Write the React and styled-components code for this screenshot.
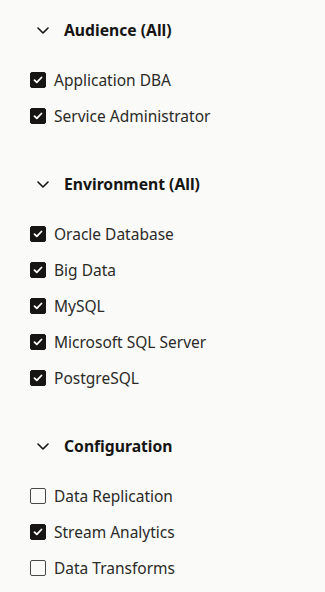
import React from 'react';
import styled, { createGlobalStyle } from 'styled-components';

const Global = createGlobalStyle`
  html, body {
    margin: 0;
    padding: 0;
    background: #fafaf9;
  }
  body {
    font-family: "Noto Sans", "Open Sans", sans-serif;
    color: #161513;
  }
`;

const Panel = styled.div`
  display: flex;
  flex-direction: column;
  padding: 18px 0 0 30px;
`;

const Section = styled.section`
  display: flex;
  flex-direction: column;
  margin-bottom: 38px;

  &:last-child {
    margin-bottom: 0;
  }
`;

const Header = styled.div`
  display: flex;
  align-items: center;
  height: 24px;
  padding-left: 7px;
  gap: 15px;
  margin-bottom: 20px;
  font-size: 15.7px;
  font-weight: 700;
`;

const List = styled.div`
  display: flex;
  flex-direction: column;
`;

const Row = styled.label`
  display: flex;
  align-items: center;
  height: 36px;
  gap: 8px;
  font-size: 15.5px;
  color: #2b2a27;
`;

const Box = styled.span`
  width: 16px;
  height: 16px;
  flex: none;
  box-sizing: border-box;
  border-radius: 2px;
  display: flex;
  align-items: center;
  justify-content: center;
  background: ${p => (p.$checked ? '#161513' : 'transparent')};
  border: 1px solid ${p => (p.$checked ? '#161513' : '#4a4844')};
`;

const Chevron = () => (
  <svg width="12" height="7" viewBox="0 0 12 7" fill="none">
    <path d="M1 1l5 5 5-5" stroke="#161513" strokeWidth="1.6" strokeLinecap="round" strokeLinejoin="round" />
  </svg>
);

const Check = () => (
  <svg width="10" height="8" viewBox="0 0 10 8" fill="none">
    <path d="M1.5 4.2l2.3 2.2 4.7-4.9" stroke="#fff" strokeWidth="1.8" strokeLinecap="round" strokeLinejoin="round" />
  </svg>
);

const sections = [
  { title: 'Audience (All)', items: [['Application DBA', true], ['Service Administrator', true]] },
  {
    title: 'Environment (All)',
    items: [
      ['Oracle Database', true],
      ['Big Data', true],
      ['MySQL', true],
      ['Microsoft SQL Server', true],
      ['PostgreSQL', true],
    ],
  },
  {
    title: 'Configuration',
    items: [['Data Replication', false], ['Stream Analytics', true], ['Data Transforms', false]],
  },
];

export default function App() {
  return (
    <>
      <Global />
      <Panel>
        {sections.map(s => (
          <Section key={s.title}>
            <Header>
              <Chevron />
              <span>{s.title}</span>
            </Header>
            <List>
              {s.items.map(([label, checked]) => (
                <Row key={label}>
                  <Box $checked={checked}>{checked && <Check />}</Box>
                  <span>{label}</span>
                </Row>
              ))}
            </List>
          </Section>
        ))}
      </Panel>
    </>
  );
}
